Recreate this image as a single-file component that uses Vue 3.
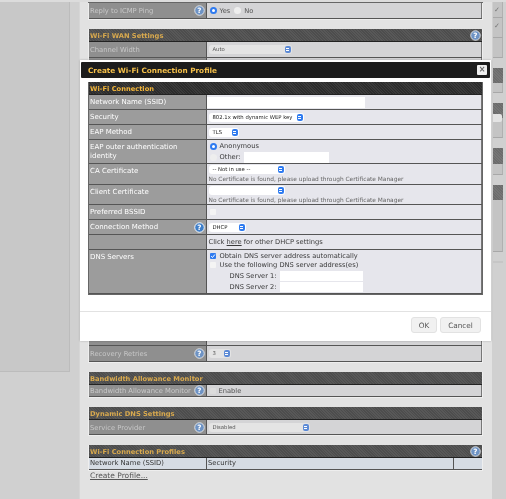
<script setup>
const rows = [
  { label: 'Network Name (SSID)', h: 'h14', kind: 'ssid' },
  { label: 'Security', h: 'h14', kind: 'security' },
  { label: 'EAP Method', h: 'h14', kind: 'eap' },
  { label: 'EAP outer authentication identity', h: 'h23', kind: 'outer' },
  { label: 'CA Certificate', h: 'h20', kind: 'ca' },
  { label: 'Client Certificate', h: 'h19', kind: 'client' },
  { label: 'Preferred BSSID', h: 'h14', kind: 'bssid' },
  { label: 'Connection Method', h: 'h14', kind: 'method', help: true },
  { label: '', h: 'h14', kind: 'dhcp' },
  { label: 'DNS Servers', h: 'h43', kind: 'dns' }
]
const certNote = 'No Certificate is found, please upload through Certificate Manager'
const rightBlocks = [
  { t: 'box', h: 16, mark: true }, { t: 'box', h: 20, mark: true }, { t: 'box', h: 20, gap: 10 },
  { t: 'dark', h: 15 }, { t: 'box', h: 10, gap: 10 },
  { t: 'dark', h: 15 }, { t: 'box', h: 20, gap: 10, pill: true },
  { t: 'dark', h: 16 }, { t: 'box', h: 11, gap: 10 },
  { t: 'dark', h: 15 }, { t: 'box', h: 52, gap: 9 },
  { t: 'rule', h: 2 }
]
</script>

<template>
  <div class="page">
    <div class="topstrip"></div>
    <div class="columns">
      <aside class="side"><div class="sidebox"></div></aside>
      <main class="panel">
        <section class="tbl first">
          <div class="row h15">
            <div class="lab dim">Reply to ICMP Ping<span class="help"><svg viewBox="0 0 12 12"><circle cx="6" cy="6" r="5.2" fill="#6e93c4" stroke="#e8e8e8" stroke-width="1"/><text x="6" y="8.8" text-anchor="middle" class="q">?</text></svg></span></div>
            <div class="val vdim radios"><i class="radio on"></i>Yes<i class="radio"></i>No</div>
          </div>
        </section>
        <section class="tbl">
          <div class="head">Wi-Fi WAN Settings<span class="help hr"><svg viewBox="0 0 12 12"><circle cx="6" cy="6" r="5.2" fill="#6e93c4" stroke="#e8e8e8" stroke-width="1"/><text x="6" y="8.8" text-anchor="middle" class="q">?</text></svg></span></div>
          <div class="row h15">
            <div class="lab dim">Channel Width</div>
            <div class="val vdim"><span class="sel w83 faded">Auto<b class="step"></b></span></div>
          </div>
          <div class="row hhidden"><div class="lab dim"></div><div class="val vdim"></div></div>
          <div class="row h15">
            <div class="lab dim">Recovery Retries<span class="help"><svg viewBox="0 0 12 12"><circle cx="6" cy="6" r="5.2" fill="#6e93c4" stroke="#e8e8e8" stroke-width="1"/><text x="6" y="8.8" text-anchor="middle" class="q">?</text></svg></span></div>
            <div class="val vdim"><span class="sel w22 faded">3<b class="step"></b></span></div>
          </div>
        </section>
        <section class="tbl">
          <div class="head">Bandwidth Allowance Monitor</div>
          <div class="row h11">
            <div class="lab dim tightlab">Bandwidth Allowance Monitor<span class="help"><svg viewBox="0 0 12 12"><circle cx="6" cy="6" r="5.2" fill="#6e93c4" stroke="#e8e8e8" stroke-width="1"/><text x="6" y="8.8" text-anchor="middle" class="q">?</text></svg></span></div>
            <div class="val vdim radios"><i class="check off"></i>Enable</div>
          </div>
        </section>
        <section class="tbl">
          <div class="head">Dynamic DNS Settings</div>
          <div class="row h14">
            <div class="lab dim">Service Provider<span class="help"><svg viewBox="0 0 12 12"><circle cx="6" cy="6" r="5.2" fill="#6e93c4" stroke="#e8e8e8" stroke-width="1"/><text x="6" y="8.8" text-anchor="middle" class="q">?</text></svg></span></div>
            <div class="val vdim"><span class="sel w101 faded">Disabled<b class="step"></b></span></div>
          </div>
        </section>
        <section class="tbl last">
          <div class="head">Wi-Fi Connection Profiles<span class="help hr"><svg viewBox="0 0 12 12"><circle cx="6" cy="6" r="5.2" fill="#6e93c4" stroke="#e8e8e8" stroke-width="1"/><text x="6" y="8.8" text-anchor="middle" class="q">?</text></svg></span></div>
          <div class="row h11 cols3">
            <div class="th">Network Name (SSID)</div>
            <div class="th">Security</div>
            <div class="th"></div>
          </div>
        </section>
        <a class="create">Create Profile...</a>
      </main>
      <div class="rightbar">
        <div v-for="(b, i) in rightBlocks" :key="i" class="rb" :class="b.t" :style="{ height: b.h + 'px', marginBottom: (b.gap || 0) + 'px' }">
          <span v-if="b.mark" class="mark">✓</span>
          <span v-if="b.pill" class="pill"></span>
        </div>
      </div>
    </div>

    <div class="modal">
      <div class="title">
        <span>Create Wi-Fi Connection Profile</span>
        <span class="close">×</span>
      </div>
      <div class="mbody">
        <section class="tbl mt">
          <div class="head bright">Wi-Fi Connection</div>
          <div v-for="r in rows" :key="r.kind" class="row" :class="r.h">
            <div class="lab">
              <span class="labtext">{{ r.label }}</span>
              <span v-if="r.help" class="help"><svg viewBox="0 0 12 12"><circle cx="6" cy="6" r="5.2" fill="#3f7fc9" stroke="#fff" stroke-width="1"/><text x="6" y="8.8" text-anchor="middle" class="q">?</text></svg></span>
            </div>
            <div class="val">
              <div v-if="r.kind === 'ssid'" class="input w158"></div>
              <span v-else-if="r.kind === 'security'" class="sel w95">802.1x with dynamic WEP key<b class="step"></b></span>
              <span v-else-if="r.kind === 'eap'" class="sel w30">TLS<b class="step"></b></span>
              <div v-else-if="r.kind === 'outer'" class="stack">
                <div class="line"><i class="radio on"></i>Anonymous</div>
                <div class="line"><i class="radio"></i>Other:<div class="input w85 other"></div></div>
              </div>
              <div v-else-if="r.kind === 'ca'" class="stack">
                <span class="sel w76">-- Not in use --<b class="step"></b></span>
                <div class="note">{{ certNote }}</div>
              </div>
              <div v-else-if="r.kind === 'client'" class="stack">
                <span class="sel w76"><b class="step"></b></span>
                <div class="note">{{ certNote }}</div>
              </div>
              <i v-else-if="r.kind === 'bssid'" class="check off"></i>
              <span v-else-if="r.kind === 'method'" class="sel w37">DHCP<b class="step"></b></span>
              <div v-else-if="r.kind === 'dhcp'" class="line">Click&nbsp;<u>here</u>&nbsp;for other DHCP settings</div>
              <div v-else-if="r.kind === 'dns'" class="stack dnsstack">
                <div class="line"><i class="check on"><svg viewBox="0 0 8 8"><path d="M1.6 4.2 3.3 6 6.5 2" fill="none" stroke="#fff" stroke-width="1.3"/></svg></i>Obtain DNS server address automatically</div>
                <div class="line"><i class="check off"></i>Use the following DNS server address(es)</div>
                <div class="line dnsl">DNS Server 1:<div class="input w84"></div></div>
                <div class="line dnsl">DNS Server 2:<div class="input w84"></div></div>
              </div>
            </div>
          </div>
        </section>
      </div>
      <div class="foot">
        <button class="btn ok">OK</button>
        <button class="btn cancel">Cancel</button>
      </div>
    </div>
  </div>
</template>

<style>
html, body { margin: 0; background: #d0d0d0; }
</style>

<style scoped>
.page { position: relative; width: 506px; height: 499px; overflow: hidden; background: #d0d0d0; font-family: "DejaVu Sans", sans-serif; font-size: 6.7px; color: #333; filter: blur(0.35px); }
.topstrip { height: 2px; background: #dcdcdc; }
.columns { display: flex; height: 497px; }
.side { width: 79px; flex: none; }
.sidebox { width: 70px; height: 370px; background: #c8c8c8; border-right: 1px solid #bcbcbc; border-bottom: 1px solid #bcbcbc; box-sizing: border-box; }
.panel { width: 413px; flex: none; background: #e2e2e2; border-left: 1px solid #d6d6d6; box-sizing: border-box; padding: 1px 9px 0 8px; }
.tbl { border: 1px solid #eee; border-top: 0; margin-bottom: 9px; background: #666; }
.tbl.first { box-shadow: 0 -1px 0 #666; }
.tbl.last { margin-bottom: 0; }
.head { position: relative; height: 12px; line-height: 14px; padding-left: 1px; font-weight: 700; font-size: 6.7px; color: #d8a94e; border-bottom: 1px solid #222;
  background: repeating-linear-gradient(45deg, #4d4d4d 0 1px, #585858 1px 2px); }
.head.bright { color: #f2b53a; background: repeating-linear-gradient(45deg, #2c2c2c 0 1px, #3a3a3a 1px 2px); }
.row { display: flex; border-bottom: 1px solid #555; }
.h11 { height: 11px; } .h14 { height: 14px; } .h15 { height: 15px; } .h19 { height: 19px; } .h20 { height: 20px; } .h23 { height: 23px; } .h43 { height: 43px; }
.hhidden { height: 287px; }
.lab { position: relative; width: 118px; flex: none; box-sizing: border-box; padding: 3px 1px 0; background: #9c9c9c; color: #fff; border-right: 1px solid #555; line-height: 9px; font-size: 7px; }
.lab.dim { background: #8f8f8f; color: #c8c8c8; font-size: 6.8px; white-space: nowrap; padding-top: 4px; }
.lab.tightlab { padding-top: 2px; }
.labtext { display: block; width: 96px; }
.val { flex: 1; min-width: 0; display: flex; align-items: center; padding-left: 1.5px; background: #e6e6ec; color: #3a3a3a; border-right: 1px solid #777; }
.val.vdim { background: #d4d4d6; color: #555; }
.radios { gap: 3px; }
.help { position: absolute; right: 1.5px; top: 50%; width: 11px; height: 11px; margin-top: -5.5px; }
.help svg { display: block; width: 11px; height: 11px; }
.help.hr { right: 1px; }
.q { font: 700 8px "DejaVu Sans", sans-serif; fill: #fff; }
.sel { position: relative; display: inline-block; box-sizing: border-box; height: 9px; line-height: 9px; padding-left: 4px; background: #fff; border-radius: 3px; font-size: 5.3px; color: #222; white-space: nowrap; flex: none; }
.sel.faded { background: #e4e4e4; color: #555; }
.step { position: absolute; right: 1px; top: 1px; width: 6px; height: 7px; border-radius: 2px; background: #2f7bf0; }
.faded .step { background: #5c8ad6; }
.step::before, .step::after { content: ""; position: absolute; left: 1.5px; width: 3px; height: 1px; background: #fff; }
.step::before { top: 2px; } .step::after { top: 4px; }
.w22 { width: 22px; } .w30 { width: 30px; } .w37 { width: 37px; } .w76 { width: 76px; } .w83 { width: 83px; } .w95 { width: 95px; } .w101 { width: 101px; }
.input { height: 11px; background: #fff; flex: none; }
.w158 { width: 158px; margin-left: -1.5px; }
.w85 { width: 85px; } .w84 { width: 83px; }
.stack { display: flex; flex-direction: column; align-items: flex-start; gap: 1px; }
.line { display: flex; align-items: center; height: 10px; font-size: 6.7px; white-space: nowrap; }
.dnsstack { gap: 0; }
.dnsstack .line { height: 9px; }
.dnsstack .dnsl { height: 11px; padding-left: 21px; }
.dnsstack .line:nth-child(3) { margin-top: 1px; }
.dnsl .input { height: 10px; margin-left: 3px; }
.other { margin-left: 3px; }
.note { font-size: 5.86px; color: #666; line-height: 8px; white-space: nowrap; }
.radio { display: inline-block; flex: none; box-sizing: border-box; width: 7px; height: 7px; margin: 0 3px 0 1px; border-radius: 50%; background: #eee; }
.radio.on { background: #fff; border: 2px solid #2f7bf0; }
.radios .radio { margin: 0 0 0 1px; }
.check { display: inline-block; flex: none; box-sizing: border-box; width: 6px; height: 6px; margin: 0 4px 0 1px; border-radius: 1px; background: #f4f4f4; }
.radios .check { margin: 0 0 0 1px; background: #dcdcdc; }
.check.on { background: #2f7bf0; }
.check svg { display: block; width: 6px; height: 6px; }
.cols3 { display: grid; grid-template-columns: 118px 1fr 28px; }
.th { background: #d6dce4; color: #333; padding-left: 1px; line-height: 10px; border-right: 1px solid #555; font-size: 6.8px; }
.th:last-child { border-right: 0; }
.create { display: block; margin: 0 0 0 2px; color: #555; text-decoration: underline; font-size: 7.5px; line-height: 10px; }
.rightbar { flex: 1; display: flex; flex-direction: column; padding: 0 3px 0 1px; }
.rb { position: relative; flex: none; box-sizing: border-box; }
.rb.box { background: #c4c4c4; border-bottom: 1px solid #a8a8a8; border-right: 1px solid #b0b0b0; }
.rb.dark { background: repeating-linear-gradient(45deg, #6c6c6c 0 1px, #767676 1px 2px); }
.rb.rule { background: #c6c6c6; }
.mark { position: absolute; left: 1px; top: 4px; font-size: 7px; line-height: 8px; color: #777; }
.pill { position: absolute; left: 0; top: -4px; width: 9px; height: 8px; background: #e4e4e4; border-radius: 0 2px 2px 0; }
.modal { position: absolute; left: 80px; top: 60px; width: 411px; height: 281px; background: #fff; box-shadow: 0 0 2px rgba(0,0,0,.25); display: flex; flex-direction: column; }
.title { display: flex; justify-content: space-between; align-items: center; height: 16px; margin: 2px 1px 0; padding: 0 3px 0 7px; background: #1c1c1c; color: #f5c04a; font-weight: 700; font-size: 7.3px; border-radius: 1px; }
.close { width: 10px; height: 10px; background: #eee; color: #666; font: 700 8px/10px "DejaVu Sans", sans-serif; text-align: center; border-radius: 1px; }
.mbody { padding: 4px 8px 0; height: 234px; box-sizing: border-box; border-bottom: 1px solid #e2e2e2; }
.mt { margin: 0; border: 1px solid #666; border-top: 0; }
.foot { display: flex; justify-content: flex-end; gap: 3px; padding: 5px 10px 0 0; }
.btn { height: 16px; box-sizing: border-box; border: 1px solid #e2e2e2; border-radius: 3px; background: #f1f1f1; color: #555; font: 7.3px "DejaVu Sans", sans-serif; padding: 0; }
.ok { width: 26px; } .cancel { width: 41px; }
</style>
